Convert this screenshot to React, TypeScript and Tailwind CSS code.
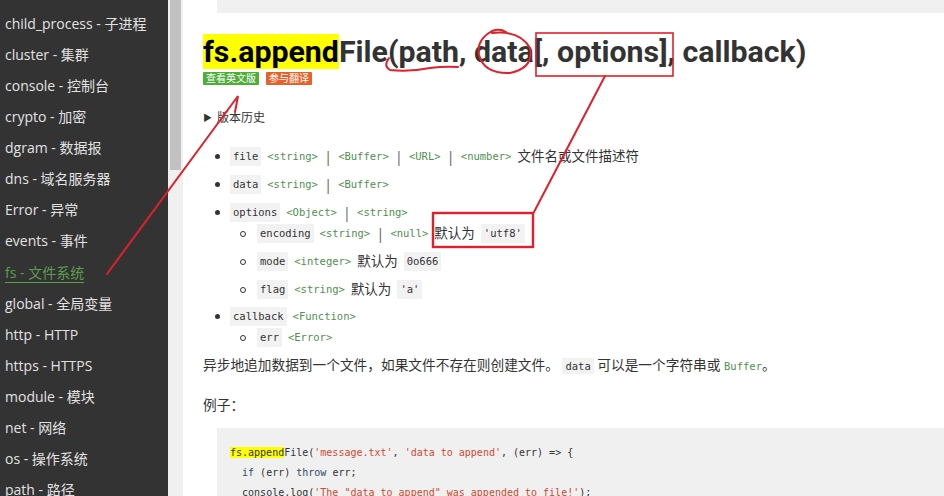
import React from "react";

const sans = { fontFamily: '"Open Sans", "Noto Sans CJK SC", sans-serif' };
const title = { fontFamily: 'Roboto, "Noto Sans CJK SC", sans-serif' };
const mono = { fontFamily: '"DejaVu Sans Mono", "Noto Sans CJK SC", monospace' };

const modules = [
  "child_process - 子进程",
  "cluster - 集群",
  "console - 控制台",
  "crypto - 加密",
  "dgram - 数据报",
  "dns - 域名服务器",
  "Error - 异常",
  "events - 事件",
  "fs - 文件系统",
  "global - 全局变量",
  "http - HTTP",
  "https - HTTPS",
  "module - 模块",
  "net - 网络",
  "os - 操作系统",
  "path - 路径",
];

function Code({ children }: { children: React.ReactNode }) {
  return (
    <code style={mono} className="bg-[#f2f2f2] px-[3px] py-[2px] text-[10.5px] text-[#333]">
      {children}
    </code>
  );
}

function Type({ children }: { children: React.ReactNode }) {
  return (
    <span style={mono} className="text-[10.5px] text-[#4f8f4f]">
      {children}
    </span>
  );
}

const Pipe = () => <span className="text-[15px] text-[#666] leading-none">|</span>;

const Dot = () => <span className="w-[5px] h-[5px] rounded-full bg-[#333] ml-[12px] mr-[10px] shrink-0" />;
const Ring = () => (
  <span className="w-[6px] h-[6px] rounded-full border border-[#333] ml-[37px] mr-[11px] shrink-0" />
);

function Row({ nested, children }: { nested?: boolean; children: React.ReactNode }) {
  return (
    <li className="flex items-center h-[21px] mt-[7px] first:mt-0">
      {nested ? <Ring /> : <Dot />}
      <div className="flex items-center gap-[6px] whitespace-nowrap">{children}</div>
    </li>
  );
}

export default function App() {
  return (
    <div style={sans} className="relative flex w-[944px] h-[496px] overflow-hidden bg-white text-[#333]">
      <nav className="w-[168px] shrink-0 bg-[#333] pt-[7.5px]">
        {modules.map((m) => (
          <div key={m} className="h-[31.13px] leading-[31.13px] px-[5px] text-[14px] whitespace-nowrap">
            {m.startsWith("fs ") ? (
              <span className="text-[#5a9e4b] underline underline-offset-[4px] decoration-[#5a9e4b]">{m}</span>
            ) : (
              <span className="text-[#e2e2e2]">{m}</span>
            )}
          </div>
        ))}
      </nav>
      <div className="w-[15px] shrink-0 bg-[#f0f0f0]">
        <div className="ml-[2px] w-[11px] h-[170px] bg-[#c1c1c1]" />
      </div>

      <main className="flex-1 pl-[20px]">
        <div className="ml-[14px] h-[13px] bg-[#f0f0f0]" />

        <h1 style={title} className="mt-[20px] text-[30.3px] font-bold leading-[37px] whitespace-nowrap text-[#333]">
          <span className="bg-[#ffff00] text-black">fs.append</span>File(path, data[, options], callback)
        </h1>

        <div className="mt-[2px] flex gap-[7px] text-[10px] leading-[13px] text-white">
          <span className="bg-[#4fae3a] px-[3px] rounded-[1px]">查看英文版</span>
          <span className="bg-[#e5632a] px-[3px] rounded-[1px]">参与翻译</span>
        </div>

        <div className="mt-[25px] flex items-center text-[12px] leading-[16px]">
          <span className="text-[9px] mr-[5px]">▶</span>
          版本历史
        </div>

        <ul className="mt-[20px] text-[13.5px]">
          <Row>
            <Code>file</Code>
            <Type>&lt;string&gt;</Type>
            <Pipe />
            <Type>&lt;Buffer&gt;</Type>
            <Pipe />
            <Type>&lt;URL&gt;</Type>
            <Pipe />
            <Type>&lt;number&gt;</Type>
            <span>文件名或文件描述符</span>
          </Row>
          <Row>
            <Code>data</Code>
            <Type>&lt;string&gt;</Type>
            <Pipe />
            <Type>&lt;Buffer&gt;</Type>
          </Row>
          <li className="mt-[7px]">
            <div className="flex items-center h-[21px]">
              <Dot />
              <div className="flex items-center gap-[6px]">
                <Code>options</Code>
                <Type>&lt;Object&gt;</Type>
                <Pipe />
                <Type>&lt;string&gt;</Type>
              </div>
            </div>
            <ul>
              <Row nested>
                <Code>encoding</Code>
                <Type>&lt;string&gt;</Type>
                <Pipe />
                <Type>&lt;null&gt;</Type>
                <span>默认为</span>
                <Code>'utf8'</Code>
              </Row>
              <Row nested>
                <Code>mode</Code>
                <Type>&lt;integer&gt;</Type>
                <span>默认为</span>
                <Code>0o666</Code>
              </Row>
              <Row nested>
                <Code>flag</Code>
                <Type>&lt;string&gt;</Type>
                <span>默认为</span>
                <Code>'a'</Code>
              </Row>
            </ul>
          </li>
          <li className="mt-[6px]">
            <div className="flex items-center h-[21px]">
              <Dot />
              <div className="flex items-center gap-[6px]">
                <Code>callback</Code>
                <Type>&lt;Function&gt;</Type>
              </div>
            </div>
            <ul>
              <Row nested>
                <Code>err</Code>
                <Type>&lt;Error&gt;</Type>
              </Row>
            </ul>
          </li>
        </ul>

        <p className="mt-[6px] text-[13.7px] leading-[21px] whitespace-nowrap">
          异步地追加数据到一个文件，如果文件不存在则创建文件。 <Code>data</Code> 可以是一个字符串或{" "}
          <Type>Buffer</Type>。
        </p>

        <p className="mt-[17px] text-[13.7px] leading-[21px]">例子：</p>

        <pre
          style={mono}
          className="mt-[13px] ml-[14px] bg-[#f0f0f0] pl-[13px] pt-[15px] pb-[20px] text-[10px] leading-[20px] text-[#333]"
        >
          <div>
            <span className="bg-[#ffff00]">fs.append</span>File(
            <span className="text-[#d14a32]">'message.txt'</span>, <span className="text-[#d14a32]">'data to append'</span>, (err) =&gt; {"{"}
          </div>
          <div>
            {"  "}
            <span className="text-[#2f4a6a]">if</span> (err) <span className="text-[#2f4a6a]">throw</span> err;
          </div>
          <div>
            {"  "}console.log(<span className="text-[#d14a32]">'The "data to append" was appended to file!'</span>);
          </div>
          <div>{"}"});</div>
        </pre>
      </main>

      <svg
        className="absolute inset-0 pointer-events-none"
        width="944"
        height="496"
        viewBox="0 0 944 496"
        fill="none"
        stroke="#e0202a"
        strokeWidth="2"
        strokeLinecap="round"
      >
        <path d="M107 274 L238 96 L235 112" />
        <path d="M389 58 Q383 66 390 70 Q410 72 430 68 Q445 66 458 67" />
        <path d="M492 33 Q520 30 530 48 Q534 68 510 73 Q484 74 479 55 Q476 40 492 31 Q500 28 506 32" />
        <rect x="536" y="33" width="137" height="43" strokeWidth="1.6" />
        <path d="M605 76 L534 212" />
        <rect x="433" y="213" width="100" height="34" strokeWidth="2.4" />
      </svg>
    </div>
  );
}
